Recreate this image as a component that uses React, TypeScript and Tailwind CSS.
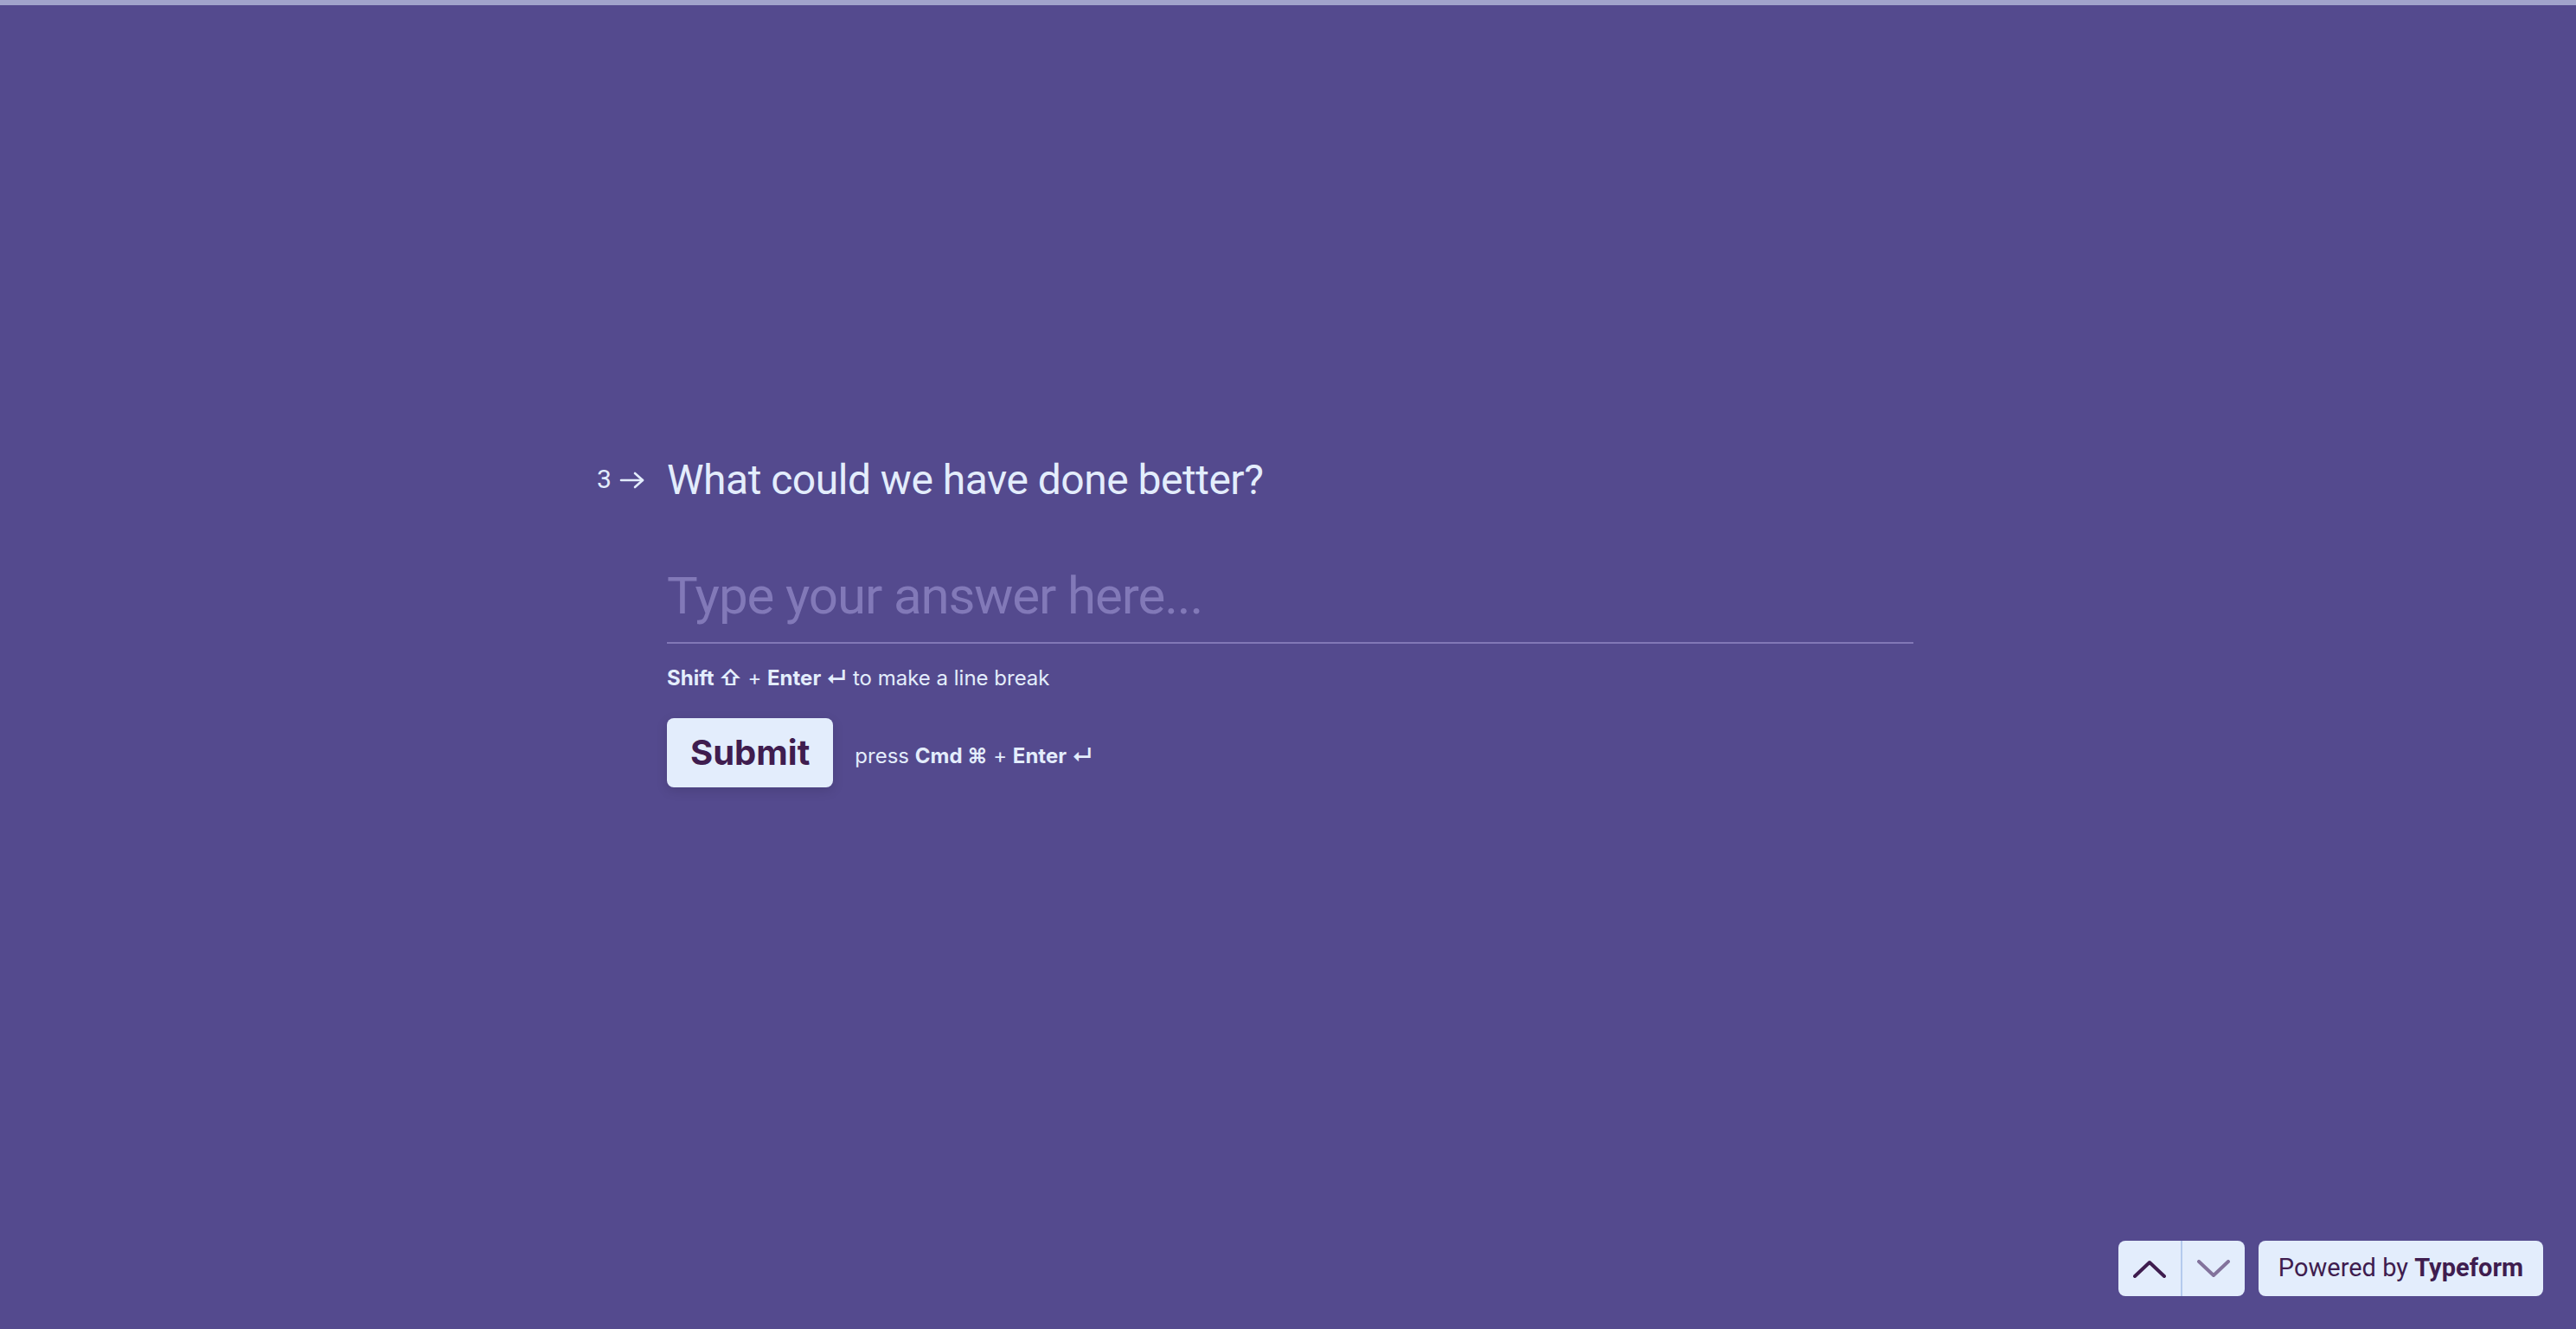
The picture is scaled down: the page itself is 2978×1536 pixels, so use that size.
import { useState } from 'react';

const UI = { fontFamily: 'Roboto, "Liberation Sans", Arial, sans-serif' };
const HINT = { fontFamily: 'Inter, "DejaVu Sans", sans-serif' };

function ArrowRight() {
  return (
    <svg width="30" height="20" viewBox="0 0 30 20" fill="none" stroke="#e3edfc" strokeWidth="2.6" strokeLinecap="round" strokeLinejoin="round">
      <line x1="2" y1="10" x2="27" y2="10" />
      <polyline points="18,2 27,10 18,18" />
    </svg>
  );
}

function Chevron({ up, color }: { up?: boolean; color: string }) {
  return (
    <svg width="38" height="21" viewBox="0 0 38 21" fill="none" stroke={color} strokeWidth="4" strokeLinecap="round" strokeLinejoin="round">
      {up ? <polyline points="2,19 19,3 36,19" /> : <polyline points="2,2 19,18 36,2" />}
    </svg>
  );
}

export default function App() {
  const [answer, setAnswer] = useState('');

  return (
    <div className="relative w-full h-[1536px] overflow-hidden bg-[#544a8e] flex flex-col">
      {/* progress */}
      <div className="h-[6px] w-full bg-[#a1a3cb]" />

      {/* question */}
      <div className="ml-[771px] w-[1441px] pt-[519px] flex flex-col">
        <div className="flex items-start -ml-[81px]">
          <div className="w-[81px] flex items-start shrink-0">
            <span className="mt-[11px] text-[30px] leading-[36px] text-[#e3edfc]" style={UI}>3</span>
            <span className="mt-[20px] ml-[9px]">
              <ArrowRight />
            </span>
          </div>
          <h1 className="text-[48px] leading-[60px] text-[#e3edfc] tracking-[-0.5px]" style={UI}>
            What could we have done better?
          </h1>
        </div>

        <textarea
          rows={1}
          value={answer}
          onChange={(e) => setAnswer(e.target.value)}
          placeholder="Type your answer here..."
          className="mt-[66px] h-[93px] w-full resize-none bg-transparent outline-none border-b-2 border-[#8278b6] pb-[15px] text-[60px] leading-[76px] text-[#e3edfc] placeholder:text-[#8279b8] tracking-[-1.1px]"
          style={UI}
        />

        <p className="mt-[24px] text-[24px] leading-[32px] text-[#e3edfc]" style={HINT}>
          <b className="font-bold">Shift ⇧</b> + <b className="font-bold">Enter ↵</b> to make a line break
        </p>

        <div className="mt-[30px] flex items-center">
          <button
            className="h-[80px] px-[27px] rounded-[8px] bg-[#e3edfc] text-[#3f1d4f] text-[40px] font-bold shadow-[0_4px_14px_0_rgba(0,0,0,0.12)]"
            style={HINT}
          >
            Submit
          </button>
          <span className="ml-[25px] mt-[8px] text-[24px] leading-[32px] text-[#e3edfc]" style={HINT}>
            press <b className="font-bold">Cmd ⌘</b> + <b className="font-bold">Enter ↵</b>
          </span>
        </div>
      </div>

      {/* footer controls */}
      <div className="absolute bottom-[38px] right-[38px] flex gap-[16px]">
        <div className="flex h-[64px] rounded-[8px] bg-[#e3edfc] overflow-hidden">
          <button className="w-[72px] flex items-center justify-center">
            <Chevron up color="#3f1d4f" />
          </button>
          <div className="w-[2px] bg-[#b4caee]" />
          <button className="w-[72px] flex items-center justify-center">
            <Chevron color="#83739c" />
          </button>
        </div>
        <div className="h-[64px] w-[329px] rounded-[8px] bg-[#e3edfc] flex items-center justify-center text-[29px] text-[#3f1d4f]" style={UI}>
          Powered by&nbsp;<b className="font-bold">Typeform</b>
        </div>
      </div>
    </div>
  );
}
